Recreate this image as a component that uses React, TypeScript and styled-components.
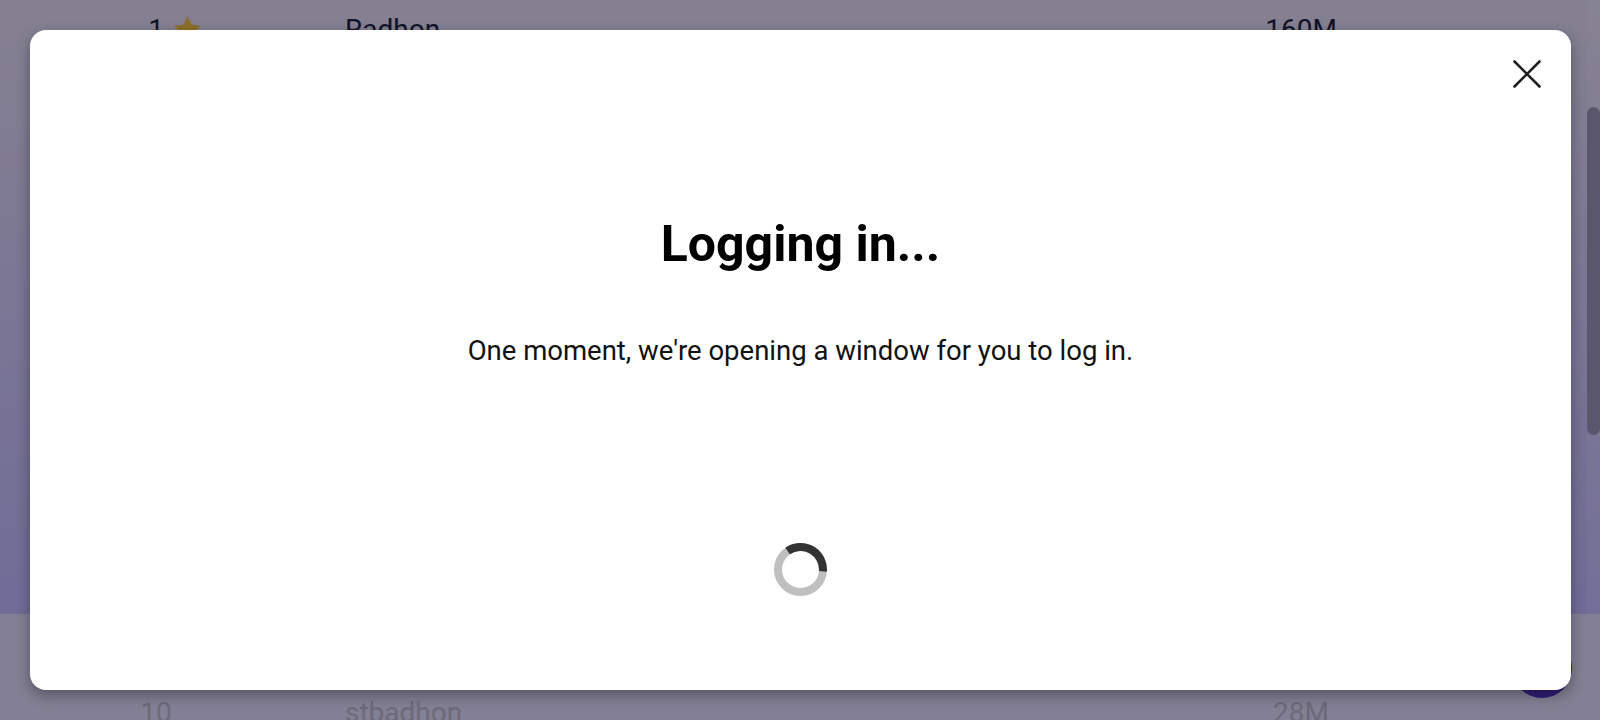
import React from "react";
import styled, { createGlobalStyle } from "styled-components";

const Global = createGlobalStyle`
  html, body { margin: 0; padding: 0; }
  body { font-family: Roboto, "Noto Sans", "Liberation Sans", sans-serif; overflow: hidden; }
`;

const Viewport = styled.div`
  position: relative;
  width: 1600px;
  height: 720px;
  overflow: hidden;
`;

const Page = styled.main`
  display: flex;
  flex-direction: column;
  width: 100%;
  height: 100%;
`;

const TopSection = styled.section`
  height: 614px;
  flex: none;
  box-sizing: border-box;
  padding-top: 14px;
  background: linear-gradient(180deg, #ded7f2 0%, #bcb4fd 100%);
`;

const BottomSection = styled.section`
  flex: 1;
  box-sizing: border-box;
  padding-top: 83px;
  background: #dad4f7;
`;

const Row = styled.div<{ $muted?: boolean }>`
  display: grid;
  grid-template-columns: 100px 1fr 200px;
  column-gap: 139px;
  padding: 0 199px 0 106px;
  font-size: 28px;
  line-height: 32px;
  color: ${(p) => (p.$muted ? "#b6b0cc" : "#212143")};
`;

const Rank = styled.div`
  position: relative;
  text-align: center;
`;

const Star = styled.svg`
  position: absolute;
  left: 66px;
  top: 0;
  width: 31px;
  height: 31px;
`;

const Name = styled.div`
  text-align: left;
`;

const Value = styled.div`
  text-align: center;
`;

const Fab = styled.div`
  position: absolute;
  right: 28px;
  bottom: 22px;
  width: 60px;
  height: 60px;
  border-radius: 50%;
  background: #5332c8;
`;

const Scrollbar = styled.div`
  position: absolute;
  top: 0;
  right: 0;
  width: 13px;
  height: 614px;
  background: rgba(255, 255, 255, 0.08);
`;

const Thumb = styled.div`
  margin-top: 107px;
  width: 13px;
  height: 328px;
  border-radius: 7px;
  background: #968fb2;
`;

const Overlay = styled.div`
  position: absolute;
  inset: 0;
  display: flex;
  box-sizing: border-box;
  padding: 30px 29px 30px 30px;
  background: rgba(0, 0, 0, 0.4);
`;

const Modal = styled.div`
  position: relative;
  flex: 1;
  display: flex;
  flex-direction: column;
  align-items: center;
  box-sizing: border-box;
  padding-top: 185px;
  background: #ffffff;
  border-radius: 16px;
  box-shadow: 0 5px 14px rgba(0, 0, 0, 0.35);
`;

const CloseButton = styled.button`
  position: absolute;
  top: 24px;
  right: 24px;
  width: 40px;
  height: 40px;
  padding: 0;
  border: none;
  background: transparent;
  display: flex;
  align-items: center;
  justify-content: center;
  cursor: pointer;
`;

const Title = styled.h1`
  margin: 0;
  font-size: 50px;
  font-weight: 700;
  line-height: normal;
  color: #000;
`;

const Message = styled.p`
  margin: 61px 0 0;
  font-size: 27.5px;
  font-weight: 400;
  line-height: normal;
  color: #111;
`;

const Spinner = styled.svg`
  margin-top: 176px;
  width: 53px;
  height: 53px;
`;

export default function App() {
  return (
    <>
      <Global />
      <Viewport>
        <Page>
          <TopSection>
            <Row>
              <Rank>
                1
                <Star viewBox="0 0 24 24">
                  <path
                    d="M12 1.5l3.1 6.9 7.4.7-5.6 5 1.7 7.4L12 17.6l-6.6 3.9 1.7-7.4-5.6-5 7.4-.7z"
                    fill="#e9b743"
                  />
                </Star>
              </Rank>
              <Name>Radhon</Name>
              <Value>160M</Value>
            </Row>
          </TopSection>
          <BottomSection>
            <Row $muted>
              <Rank>10</Rank>
              <Name>stbadhon</Name>
              <Value>28M</Value>
            </Row>
          </BottomSection>
        </Page>
        <Fab />
        <Scrollbar>
          <Thumb />
        </Scrollbar>
        <Overlay>
          <Modal role="dialog">
            <CloseButton aria-label="Close">
              <svg width="28" height="28" viewBox="0 0 28 28">
                <path
                  d="M1.5 1.5L26.5 26.5M26.5 1.5L1.5 26.5"
                  stroke="#1f1f1f"
                  strokeWidth="2.6"
                  strokeLinecap="round"
                  fill="none"
                />
              </svg>
            </CloseButton>
            <Title>Logging in...</Title>
            <Message>One moment, we're opening a window for you to log in.</Message>
            <Spinner viewBox="0 0 53 53">
              <circle cx="26.5" cy="26.5" r="22.5" stroke="#bfbfbf" strokeWidth="8" fill="none" />
              <path
                d="M13.6 8.07 A22.5 22.5 0 0 1 48.91 28.46"
                stroke="#333333"
                strokeWidth="8"
                fill="none"
              />
            </Spinner>
          </Modal>
        </Overlay>
      </Viewport>
    </>
  );
}
